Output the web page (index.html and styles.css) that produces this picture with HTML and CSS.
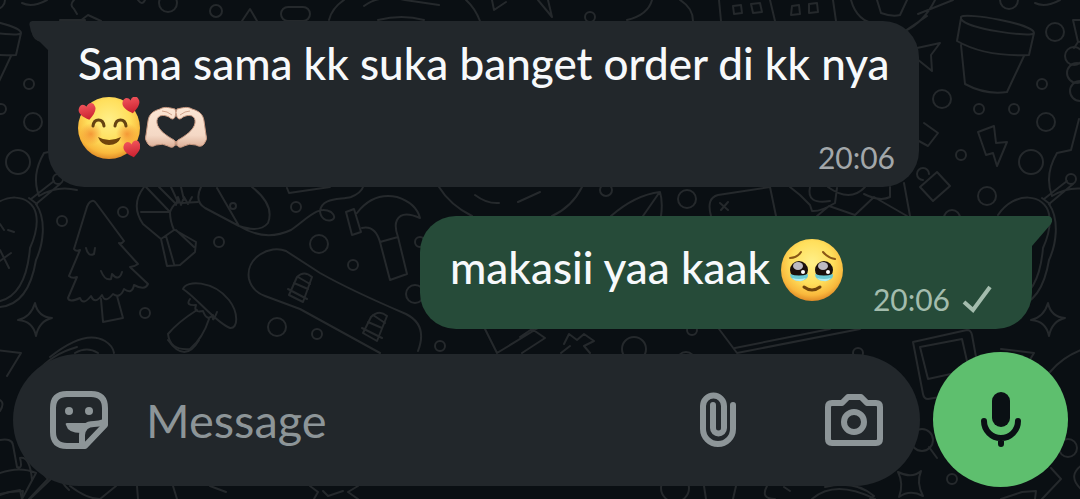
FILE: index.html
```html
<!DOCTYPE html>
<html lang="id">
<head>
  <meta charset="UTF-8">
  <meta name="viewport" content="width=device-width, initial-scale=1">

  <title>Chat</title>

  <link rel="stylesheet" href="styles.css">
</head>

<body>
<!-- Wallpaper, the doodles repeat every 1013 units -->
<svg class="wallpaper" viewBox="0 0 1080 499" preserveAspectRatio="xMinYMin slice" aria-hidden="true">
  <g id="doodles">
    <!-- flower pot -->
    <path d="M961 17C966 12 1034 24 1034 33C1034 38 966 29 961 19ZM961 18L957 41Q985 57 1029 55L1034 33M961 45L965 84Q985 95 1007 92L1024 56"/>
    <!-- star, diamond, bolt, padlock -->
    <path d="M917 48L940 43L931 55L932 71L917 59M924 123L938 133L928 146L917 140M978 132L994 126L996 143L1007 142L997 166L993 153L986 155ZM937 172L950 186L933 201L920 187ZM923 180A6 6 0 1 1 929 174"/>
    <circle cx="942" cy="99" r="9"/><circle cx="979" cy="109" r="5"/><circle cx="1014" cy="109" r="5"/>
    <circle cx="1042" cy="84" r="5"/><circle cx="1046" cy="122" r="9"/><circle cx="1055" cy="32" r="9"/>
    <circle cx="961" cy="155" r="5"/><circle cx="1031" cy="162" r="12"/><circle cx="987" cy="196" r="9"/>
    <circle cx="952" cy="218" r="8"/><circle cx="1009" cy="0" r="9"/>
    <!-- grapes -->
    <path d="M1073 20L1078 42L1093 41L1098 20ZM1078 42L1074 48"/>
    <circle cx="1074" cy="56" r="9"/><circle cx="1077" cy="73" r="10"/><circle cx="1080" cy="91" r="10"/>
    <!-- peanut boat and spoon -->
    <path d="M1052 196Q1044 175 1057 153L1071 150L1079 119M1052 196Q1070 185 1090 190M1044 199L1067 181M1049 204L1073 184M1042 198L1050 204"/>
    <circle cx="1071" cy="179" r="5"/>
    <path d="M998 215C1015 190 1045 194 1049 214Q1052 228 1043 248C1040 283 1027 300 1008 302M1049 204C1060 220 1056 245 1049 260C1044 290 1032 308 1008 307M1013 224L1017 230M1021 230L1027 232M1013 250L1022 268M1024 253L1010 263"/>
    <!-- sparkle -->
    <path d="M1048 303Q1051 317 1065 318Q1052 321 1049 336Q1046 321 1031 320Q1044 317 1048 303Z"/>
    <!-- photo card and magnifier -->
    <path d="M913 342L967 330Q971 330 972 335L982 390L928 399Q924 399 923 394ZM920 347L962 339L969 370L928 379ZM929 447L937 458"/>
    <circle cx="922" cy="440" r="11"/>
    <path d="M898 472Q912 479 921 471Q916 483 923 496Q910 489 899 497Q904 484 898 472Z"/>
    <circle cx="952" cy="479" r="5"/><circle cx="1068" cy="448" r="9"/>
    <path d="M1050 372Q1065 354 1090 347M1051 468L1061 479L1042 499M1001 499L1022 492L1036 491L1035 499M1085 463Q1065 475 1082 490M1001 349L1034 353L1020 376"/>
    <!-- top row -->
    <path d="M74 0Q69 5 74 9L77 14M80 21L88 15L101 21M138 0Q142 6 145 0M242 21L250 9L257 21M329 20Q332 8 344 0M364 6Q380 -6 405 0L439 5M378 20Q402 14 424 20M480 21Q475 8 466 0M492 0L494 10L506 2M538 0L552 17L548 0M627 20Q648 15 652 0M680 0Q693 8 693 21M719 0L721 21M770 0L775 21M733 6L741 5L742 13L734 14ZM751 4L760 3L762 12L753 13ZM792 6L799 5L800 14L791 15ZM809 4L817 3L818 12L809 13Z"/>
    <path d="M833 0L836 21M851 0Q857 22 877 24M877 0L881 13Q892 17 900 15L907 0M935 0Q924 22 905 31L927 16M953 0L918 14M1035 3Q1045 8 1060 0"/>
    <circle cx="168" cy="3" r="9"/><circle cx="216" cy="11" r="6"/><rect x="281" y="7" width="29" height="14" rx="7"/><circle cx="590" cy="17" r="5"/>
    <!-- pine tree -->
    <path d="M92 201Q88 202 86 210L74 249Q76 252 80 250L69 276Q72 279 77 277L68 298Q69 303 80 298Q83 306 91 296Q95 305 102 295Q105 304 113 294Q120 299 124 289Q132 295 134 285Q145 291 148 284L130 267Q134 267 138 264L119 243Q122 244 124 241L96 203Q94 200 92 201ZM101 299L103 322L123 318L117 296M86 248Q88 257 94 254L95 248M101 271Q105 281 111 279L112 274M112 274Q119 282 122 272"/>
    <circle cx="62" cy="221" r="5"/><circle cx="123" cy="212" r="5"/><circle cx="145" cy="313" r="5"/><circle cx="219" cy="242" r="5"/>
    <circle cx="296" cy="207" r="5"/><circle cx="319" cy="244" r="9"/><circle cx="353" cy="265" r="5"/><circle cx="277" cy="327" r="9"/>
    <circle cx="317" cy="334" r="5"/><circle cx="415" cy="294" r="9"/><circle cx="420" cy="242" r="5"/><circle cx="440" cy="346" r="5"/>
    <!-- shrimp -->
    <path d="M144 187Q130 205 143 224L161 239L174 230Q170 221 170 212L141 212M146 187L170 212Q175 200 182 203L198 202M159 187L175 203M171 187L178 202M181 187L184 200M161 239L167 266L180 265L195 252L196 242L175 230M166 236L174 264M176 230L194 247M176 205L178 197L181 205L184 197L188 204L192 197"/>
    <!-- disc and string -->
    <path d="M201 187Q194 201 205 208L239 226L217 188M252 187Q275 205 268 223Q260 233 239 226M239 226Q265 242 291 230C308 218 318 205 331 212C342 221 321 226 320 211C322 197 340 200 351 197Q361 193 363 187M287 188L289 193L330 187"/>
    <circle cx="233" cy="206" r="3"/>
    <!-- hammer -->
    <path d="M346 212L354 209L361 232L352 235ZM357 213Q373 192 397 197Q416 203 420 218Q402 210 397 220Q394 226 398 237L380 242Q375 225 362 228M380 242L390 280L407 274L398 237"/>
    <!-- mushroom -->
    <path d="M183 289C186 280 213 280 229 300C239 313 238 329 230 328C216 323 197 298 183 289ZM190 299Q185 306 196 305Q193 313 203 311Q207 322 213 315Q212 325 217 312M197 310Q178 322 168 334Q170 351 190 349Q203 338 209 319"/>
    <!-- skateboard -->
    <path d="M286 251C270 244 245 258 249 279Q252 291 265 296L300 309L380 353M286 251L320 273Q350 290 406 314Q428 325 418 351M289 295L297 277Q304 270 312 277L303 302ZM294 283L308 289M288 289L307 299M298 277L310 284M363 333L371 317Q379 309 387 316L377 341ZM368 322L382 328M362 328L382 338M373 315L385 323"/>
    <!-- between the bubbles and the input -->
    <path d="M50 357Q85 329 105 341Q113 346 114 353M75 353Q87 346 98 353M168 340Q185 364 199 340M439 187Q450 205 472 216M582 187Q572 207 552 216M475 195Q487 204 499 203M518 202L540 192M611 216Q635 195 660 192Q663 202 661 216M643 216L659 193M711 216Q706 198 718 195L770 187L776 216M720 203L728 210M728 202L721 210M485 329L497 353L538 328M520 337L532 329L545 338L522 353M564 344L569 334L577 340L584 334L594 341L584 346L590 353M561 353L570 346M719 329L737 353L860 329M735 348L830 329"/>
    <path d="M790 187L800 195L810 205L812 211Q820 212 835 203L837 188M810 187Q806 205 830 201M817 216L829 206L855 215L874 197L907 216M828 187Q850 203 865 187M864 194Q880 202 890 197L890 187M904 183L910 216"/>
    <circle cx="606" cy="190" r="6"/><circle cx="687" cy="199" r="9"/><circle cx="634" cy="349" r="12"/><circle cx="692" cy="330" r="5"/><circle cx="858" cy="353" r="5"/><circle cx="686" cy="361" r="9"/>
    <!-- below the input -->
    <path d="M0 400Q5 403 0 411M0 440Q12 438 13 445L17 467Q23 470 20 458Q30 456 32 480M-5 475Q18 465 36 473L22 499M0 494L20 490L22 499M30 499L53 477M70 486Q87 499 100 499L116 486M137 486L138 499M173 486L177 499M210 486L226 492M310 486L318 492L314 499M323 491L328 496L343 491M358 486L348 492L358 499M704 486L706 499M736 486L733 499M767 486Q760 499 775 499M784 487L790 491M812 499Q835 479 875 499M825 487Q855 480 874 496L870 499"/>
    <circle cx="675" cy="488" r="14"/>
  </g>
  <use href="#doodles" x="-1013"/>
</svg>

<div class="chat">
  <main class="messages">
    <div class="bubble bubble-in">
      <svg class="tail" viewBox="0 0 20 30" aria-hidden="true"><path d="M20 0H3Q-1 1 1 6Q2 15 9 19L20 30Z"/></svg>
      <p class="text">
        Sama sama kk suka banget order di kk nya<br>
        <svg class="emoji" viewBox="0 0 62 62" role="img" aria-label="Smiling face with hearts">
          <defs>
            <radialGradient id="face" cx="0.5" cy="0.38" r="0.62">
              <stop offset="0" stop-color="#fff08a"/>
              <stop offset="0.55" stop-color="#ffdf5c"/>
              <stop offset="0.85" stop-color="#f9b83c"/>
              <stop offset="1" stop-color="#e08c28"/>
            </radialGradient>
            <radialGradient id="blush">
              <stop offset="0" stop-color="#f07c28" stop-opacity="0.7"/>
              <stop offset="1" stop-color="#f07c28" stop-opacity="0"/>
            </radialGradient>
            <linearGradient id="heart" x2="0" y2="1">
              <stop offset="0" stop-color="#f0525a"/>
              <stop offset="1" stop-color="#c9202e"/>
            </linearGradient>
            <path id="love" d="M9 17C2 12 -1 8 1 4C3 0 7 0 9 4C11 0 16 0 17 4C19 8 15 13 9 17Z" fill="url(#heart)"/>
          </defs>
          <circle cx="31" cy="31" r="31" fill="url(#face)"/>
          <circle cx="13" cy="37" r="11" fill="url(#blush)"/><circle cx="49" cy="37" r="11" fill="url(#blush)"/>
          <path d="M15 29C16 21 25 21 26 29M37 29C38 21 47 21 48 29" fill="none" stroke="#654312" stroke-width="3" stroke-linecap="round"/>
          <path d="M20 40Q31 46 43 40Q40 48 31 48Q23 48 20 40Z" fill="#70440c"/>
          <use href="#love" transform="translate(-1 8) rotate(-12)"/>
          <use href="#love" transform="translate(43 1) rotate(-10)"/>
          <use href="#love" transform="translate(44 45) rotate(-10)"/>
        </svg><svg class="emoji" viewBox="0 0 62 62" role="img" aria-label="Heart hands">
          <defs>
            <linearGradient id="skin" x2="0" y2="1">
              <stop offset="0" stop-color="#fce6d4"/>
              <stop offset="0.7" stop-color="#f4d8c5"/>
              <stop offset="1" stop-color="#dcaf98"/>
            </linearGradient>
            <path id="hand" d="M30 12C25 11 20 9 15 12C8 14 4 17 3 24L1 38Q-1 42 3 47Q6 51 11 48Q18 46 23 49Q28 52 30 48Q32 45 29 43C22 39 13 33 12 26C11 18 18 17 24 20Q28 24 30 20Q32 15 30 12Z"/>
          </defs>
          <g fill="url(#skin)" stroke="#c89880"><use href="#hand"/><use href="#hand" transform="translate(62 0) scale(-1 1)"/></g>
          <path d="M17 14Q22 14 27 18M45 14Q40 14 35 18M30 44V49M32 44V49" fill="none" stroke="#d3a48c"/>
        </svg>
      </p>
      <div class="meta"><time datetime="20:06">20:06</time></div>
    </div>

    <div class="bubble bubble-out">
      <svg class="tail" viewBox="0 0 20 30" aria-hidden="true"><path d="M0 0H17Q22 2 19 8L0 30Z"/></svg>
      <p class="text">makasii yaa kaak
        <svg class="emoji" viewBox="0 0 62 62" role="img" aria-label="Face holding back tears">
          <defs>
            <g id="teary">
              <circle cx="10" cy="10" r="9" fill="#1a100c"/>
              <ellipse cx="9" cy="6" rx="5" ry="4" fill="#bdbac2"/>
              <circle cx="14" cy="12" r="2" fill="#fff"/>
              <path d="M1 14Q10 17 19 14Q20 20 10 21Q1 20 1 14Z" fill="#69c9d3"/>
              <path d="M3 18Q10 20 17 18Q14 22 10 21Q5 21 3 18Z" fill="#b2edf0"/>
            </g>
          </defs>
          <circle cx="31" cy="31" r="31" fill="url(#face)"/>
          <use href="#teary" x="8" y="21"/><use href="#teary" x="33" y="21"/>
          <path d="M9 19Q16 19 20 13M42 13Q47 19 54 20" fill="none" stroke="#8a5716" stroke-width="2" stroke-linecap="round"/>
          <path d="M23 48Q31 54 39 48" fill="none" stroke="#70440c" stroke-width="3" stroke-linecap="round"/>
        </svg>
      </p>
      <div class="meta">
        <time datetime="20:06">20:06</time>
        <svg class="check" viewBox="0 0 30 28" role="img" aria-label="Sent"><path d="M2 17L11 25L28 2"/></svg>
      </div>
    </div>
  </main>

  <form class="composer">
    <div class="field">
      <button type="button" aria-label="Stickers">
        <svg class="icon" viewBox="0 0 58 58">
          <path d="M17 3H41Q55 3 55 17V34L35 55H17Q3 55 3 41V17Q3 3 17 3Z"/>
          <path d="M32 54V44Q33 33 44 33Q49 33 54 31"/>
          <g class="solid"><circle cx="19" cy="20" r="4"/><circle cx="39" cy="20" r="4"/><path d="M17 32H43Q33 34 31 42Q18 42 16 34Q15 32 17 32Z"/></g>
        </svg>
      </button>
      <input type="text" placeholder="Message" aria-label="Message">
      <button type="button" aria-label="Attach">
        <svg class="icon" viewBox="0 0 58 58">
          <path d="M44 14V38A15 15 0 0 1 14 38V15A10 10 0 0 1 35 15V37A5 5 0 0 1 24 37V14"/>
        </svg>
      </button>
      <button type="button" aria-label="Camera">
        <svg class="icon" viewBox="0 0 58 58">
          <path d="M7 12H17L23 6H36L42 12H51Q55 12 55 16V48Q55 52 51 52H7Q3 52 3 48V16Q3 12 7 12Z"/>
          <circle cx="29" cy="31" r="10"/>
        </svg>
      </button>
    </div>
    <button class="mic" type="button" aria-label="Record voice message">
      <svg viewBox="0 0 40 56">
        <rect x="11" y="0" width="18" height="35" rx="9"/>
        <path d="M3 29A17 17 0 0 0 37 29M20 46V52"/>
      </svg>
    </button>
  </form>
</div>
</body>
</html>
```
FILE: styles.css
```css
html, body {
  height: 100%;
}

body {
  margin: 0;
  background-color: #0a0f13;
  color: #f7f9fb;
  font-family: Lato, "Noto Sans", sans-serif;
  overflow: hidden;
}

button, input {
  border: 0;
  padding: 0;
  background: none;
  color: inherit;
  font-family: inherit;
}

button {
  cursor: pointer;
}

svg {
  display: block;
}

.wallpaper {
  position: absolute;
  top: 0;
  left: 0;
  width: 100%;
  height: 100%;
  fill: none;
  stroke: #25292c;
  stroke-width: 2;
  stroke-linejoin: round;
  stroke-linecap: round;
}

.chat {
  position: relative;
  display: flex;
  flex-direction: column;
  min-height: 100%;
  box-sizing: border-box;
  padding: 21px 12px 12px 13px;
}

/* Messages */
.messages {
  flex: 1;
  display: flex;
  flex-direction: column;
  gap: 29px;
  padding: 0 36px 0 35px;
}

.bubble {
  position: relative;
  display: flex;
  justify-content: space-between;
  box-sizing: border-box;
  width: 100%;
  border-radius: 36px;
}

.bubble-in {
  max-width: 871px;
  padding: 11px 24px 28px 30px;
  background-color: #22272b;
  border-top-left-radius: 0;
}

.bubble-out {
  align-self: flex-end;
  max-width: 612px;
  padding: 20px 40px 28px 30px;
  background-color: #264b39;
  border-top-right-radius: 0;
}

/* Little corner that sticks out next to the bubble */
.tail {
  position: absolute;
  top: 0;
  width: 20px;
  height: 30px;
}

.bubble-in .tail {
  right: 100%;
  margin-right: -1px;
  fill: #22272b;
}

.bubble-out .tail {
  left: 100%;
  fill: #264b39;
}

.text {
  margin: 0;
  font-size: 44px;
  font-weight: 500;
  line-height: 62px;
  white-space: nowrap;
}

.emoji {
  display: inline-block;
  width: 62px;
  height: 62px;
  margin-top: 3px;
  vertical-align: top;
}

.emoji + .emoji {
  margin-left: 5px;
}

.meta {
  display: flex;
  align-items: center;
  align-self: flex-end;
  gap: 12px;
  margin-bottom: -16px;
  color: #a3a7aa;
  font-size: 30px;
  line-height: 36px;
}

/* The time sits under the text, it takes no width from it */
.bubble-in .meta {
  width: 0;
  justify-content: flex-end;
}

.bubble-out .meta {
  color: #a3bcad;
}

.check {
  width: 30px;
  height: 28px;
  fill: none;
  stroke: currentColor;
  stroke-width: 4;
}

/* Input row */
.composer {
  display: flex;
  align-items: center;
  gap: 13px;
}

.field {
  flex: 1;
  display: flex;
  align-items: center;
  min-width: 0;
  height: 132px;
  box-sizing: border-box;
  padding: 0 37px;
  border-radius: 66px;
  background-color: #22272b;
  color: #8d9598;
}

.field input {
  flex: 1;
  min-width: 0;
  margin-left: 38px;
  font-size: 47px;
  outline: none;
}

.field input::placeholder {
  color: #8d9598;
  opacity: 1;
}

.field button + button {
  margin-left: 78px;
}

.icon {
  width: 58px;
  height: 58px;
  fill: none;
  stroke: currentColor;
  stroke-width: 6;
  stroke-linejoin: round;
  stroke-linecap: round;
}

.icon .solid {
  fill: currentColor;
  stroke: none;
}

.mic {
  display: flex;
  align-items: center;
  justify-content: center;
  width: 135px;
  height: 135px;
  border-radius: 50%;
  background-color: #5ebf6e;
}

.mic svg {
  width: 40px;
  height: 56px;
  fill: #0a1014;
}

.mic path {
  fill: none;
  stroke: #0a1014;
  stroke-width: 6;
  stroke-linecap: round;
}
```
